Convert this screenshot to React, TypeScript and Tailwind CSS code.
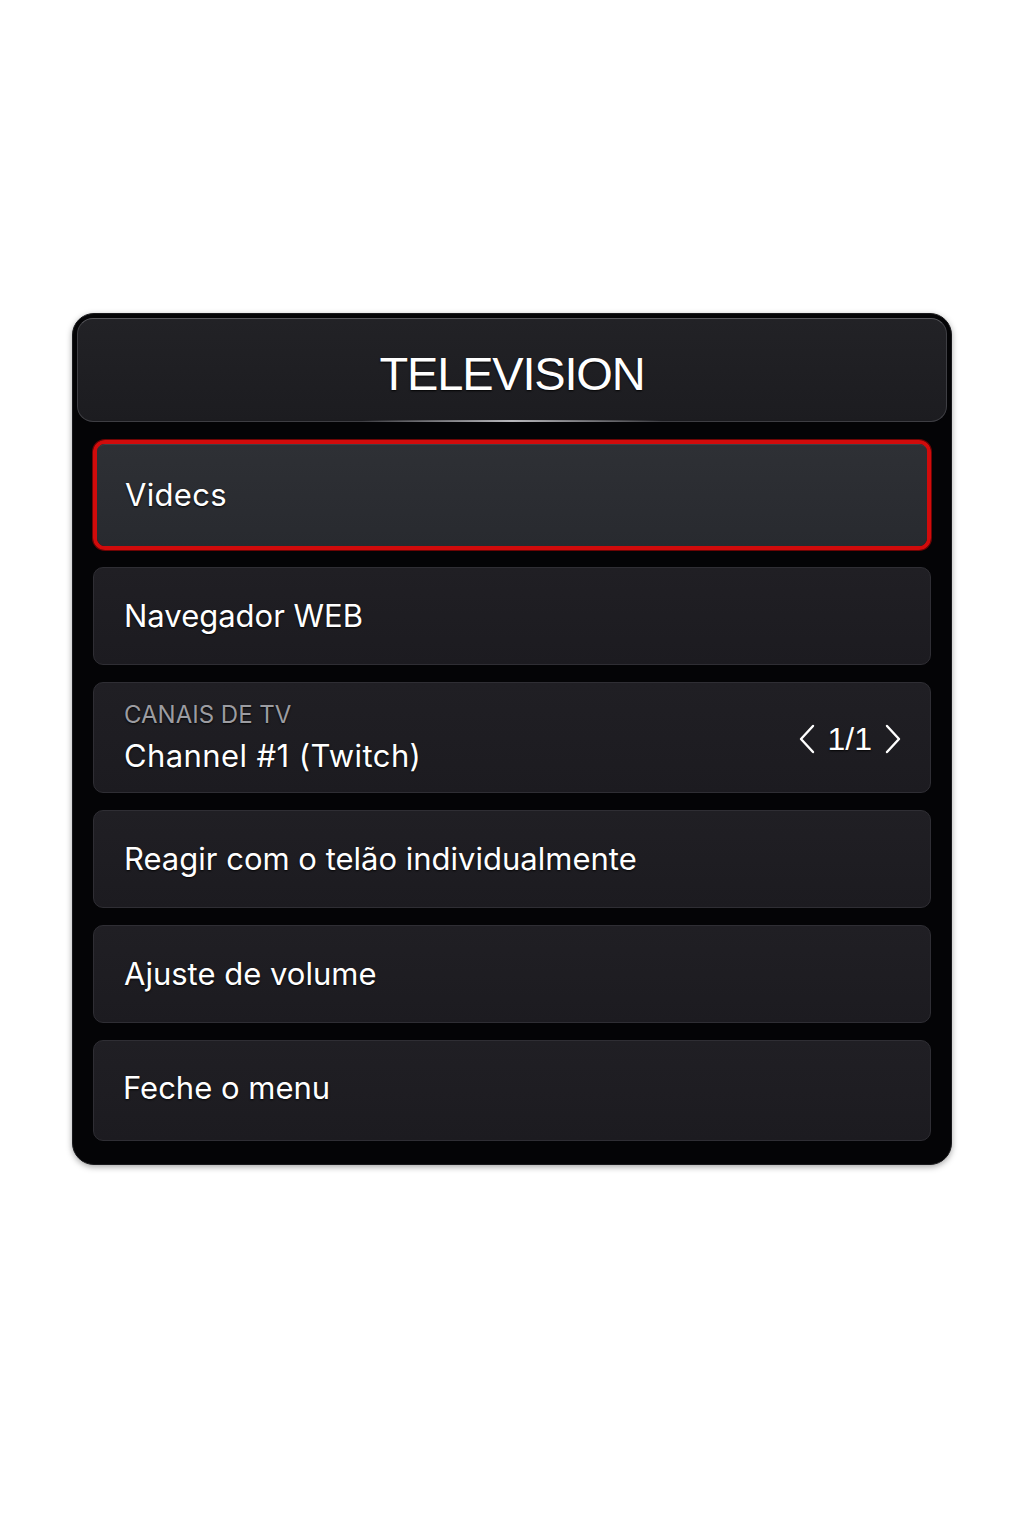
import React from "react";

const FONT = "font-['Inter','Liberation_Sans',Arial,sans-serif]";
const ARIAL = "font-['Liberation_Sans',Arial,sans-serif]";
const TEXT_SHADOW = "[text-shadow:0_1px_2px_rgba(0,0,0,0.9)]";

function Chevron({ dir }: { dir: "left" | "right" }) {
  return (
    <svg width="18" height="30" viewBox="0 0 18 30" fill="none" className="shrink-0">
      <path
        d={dir === "left" ? "M15 2 L3 15 L15 28" : "M3 2 L15 15 L3 28"}
        stroke="white"
        strokeWidth="2.4"
        strokeLinecap="round"
        strokeLinejoin="round"
      />
    </svg>
  );
}

interface MenuItemProps {
  label: string;
  selected?: boolean;
}

function MenuItem({ label, selected }: MenuItemProps) {
  if (selected) {
    return (
      <div className="rounded-[12px] border-[4px] border-[#d10b0b] shadow-[0_0_0_1px_#6e0404,inset_0_0_0_1px_#5a0606]">
        <div className="h-[102px] rounded-[8px] bg-gradient-to-b from-[#2e3035] to-[#282a2f] border-t border-[#3e4046] flex items-center pl-[28px]">
          <span className={`text-[31px] text-white tracking-[0.3px] ${TEXT_SHADOW}`}>{label}</span>
        </div>
      </div>
    );
  }
  return (
    <div className="h-[98px] rounded-[10px] bg-gradient-to-b from-[#201f24] to-[#1c1b20] border border-[#2f2e34] flex items-center pl-[30px]">
      <span className={`text-[31px] text-white ${TEXT_SHADOW}`}>{label}</span>
    </div>
  );
}

export default function App() {
  return (
    <div className={`min-h-[1536px] bg-white pt-[313px] px-[72px] ${FONT}`}>
      <div className="w-[880px] rounded-[22px] bg-[#040406] border border-[#1a1a1d] p-[4px] pb-[23px] shadow-[0_2px_6px_rgba(0,0,0,0.35)]">
        {/* Header */}
        <div className="relative h-[104px] rounded-[16px] bg-gradient-to-b from-[#222226] to-[#1c1c20] border border-[#3e3e43] border-t-[#58585d] flex items-center justify-center pt-[6px]">
          <h1 className={`${ARIAL} text-[47px] leading-none text-white tracking-[-1.2px] ${TEXT_SHADOW}`}>TELEVISION</h1>
          <div className="absolute bottom-[-1px] left-1/2 -translate-x-1/2 w-[300px] h-[2px] bg-gradient-to-r from-transparent via-[#b8b8bc] to-transparent" />
        </div>

        {/* Items */}
        <div className="mt-[18px] px-[16px] flex flex-col gap-[17px]">
          <MenuItem label="Videcs" selected />
          <MenuItem label="Navegador WEB" />

          <div className="h-[111px] rounded-[10px] bg-gradient-to-b from-[#201f24] to-[#1c1b20] border border-[#2f2e34] flex items-center justify-between pl-[30px] pr-[28px]">
            <div className="flex flex-col">
              <span className={`text-[24px] leading-[28px] text-[#9c9ca1] ${TEXT_SHADOW}`}>CANAIS DE TV</span>
              <span className={`mt-[8px] text-[31px] leading-[38px] text-white tracking-[0.4px] ${TEXT_SHADOW}`}>Channel #1 (Twitch)</span>
            </div>
            <div className="flex items-center gap-[12px] mt-[2px]">
              <Chevron dir="left" />
              <span className={`${ARIAL} text-[32px] leading-none text-white ${TEXT_SHADOW}`}>1/1</span>
              <Chevron dir="right" />
            </div>
          </div>

          <MenuItem label="Reagir com o telão individualmente" />
          <MenuItem label="Ajuste de volume" />
          <div className="h-[101px] rounded-[10px] bg-gradient-to-b from-[#201f24] to-[#1c1b20] border border-[#2f2e34] flex items-center pl-[29px] pb-[5px]">
            <span className={`text-[31px] text-white ${TEXT_SHADOW}`}>Feche o menu</span>
          </div>
        </div>
      </div>
    </div>
  );
}
